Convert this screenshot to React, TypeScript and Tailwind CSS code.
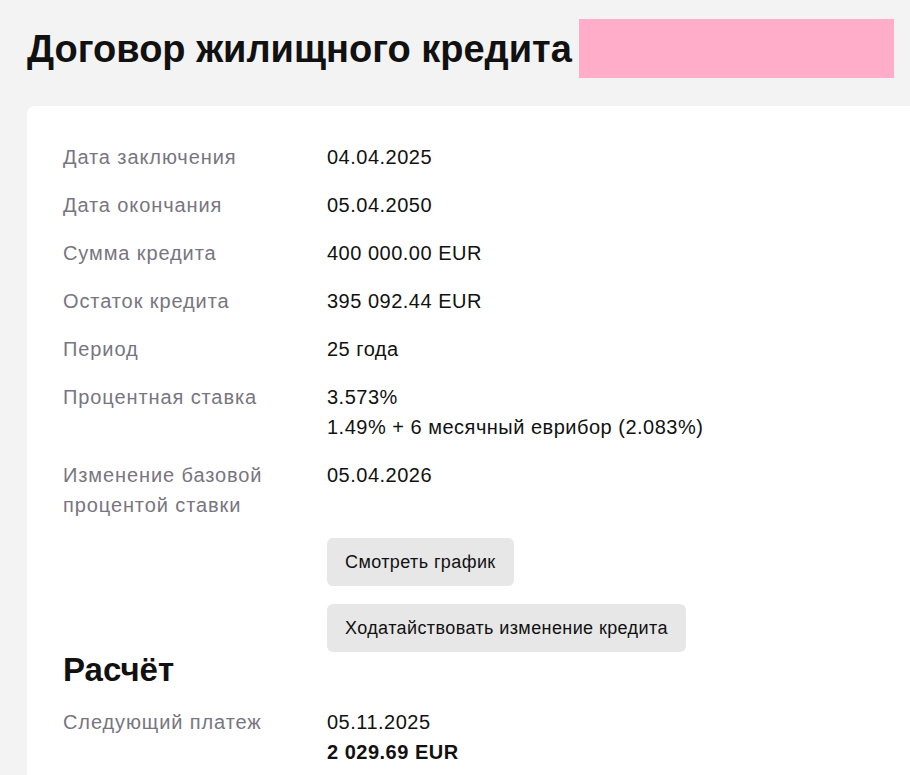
const rows: { label: string; value: string[] }[] = [
  { label: "Дата заключения", value: ["04.04.2025"] },
  { label: "Дата окончания", value: ["05.04.2050"] },
  { label: "Сумма кредита", value: ["400 000.00 EUR"] },
  { label: "Остаток кредита", value: ["395 092.44 EUR"] },
  { label: "Период", value: ["25 года"] },
  { label: "Процентная ставка", value: ["3.573%", "1.49% + 6 месячный еврибор (2.083%)"] },
  { label: "Изменение базовой процентой ставки", value: ["05.04.2026"] },
];

const Row = ({ label, value }: { label: string; value: React.ReactNode }) => (
  <div className="flex">
    <div className="w-[264px] shrink-0 pr-6 text-[#787580] tracking-[0.9px]">{label}</div>
    <div className="text-[#111] tracking-[0.5px]">{value}</div>
  </div>
);

export default function App() {
  return (
    <div
      className="min-h-screen bg-[#f3f3f3] pl-[27px] pt-[19px] overflow-hidden"
      style={{ fontFamily: "'Liberation Sans', Arial, sans-serif" }}
    >
      <div className="flex items-center gap-[7px] h-[59px]">
        <h1 className="text-[38px] font-bold text-[#111] leading-none">
          Договор жилищного кредита
        </h1>
        <div className="w-[315px] h-[59px] bg-[#ffadc9]" />
      </div>

      <div className="mt-[28px] bg-white rounded-l-lg pl-9 pt-9 pb-10 text-[20px] leading-[30px]">
        <div className="flex flex-col gap-[18px]">
          {rows.map((r) => (
            <Row
              key={r.label}
              label={r.label}
              value={r.value.map((v) => (
                <div key={v}>{v}</div>
              ))}
            />
          ))}
        </div>

        <div className="ml-[264px] mt-[18px] flex flex-col items-start gap-[18px]">
          <button className="h-12 px-[18px] rounded-md bg-[#e7e7e7] text-[18px] tracking-[0.4px] text-[#111]">
            Смотреть график
          </button>
          <button className="h-12 px-[18px] rounded-md bg-[#e7e7e7] text-[18px] tracking-[0.4px] text-[#111]">
            Ходатайствовать изменение кредита
          </button>
        </div>

        <h2 className="mt-0 text-[33px] leading-[36px] font-bold text-[#111]">Расчёт</h2>

        <div className="mt-[19px]">
          <Row
            label="Следующий платеж"
            value={
              <>
                <div>05.11.2025</div>
                <div className="font-bold">2 029.69 EUR</div>
              </>
            }
          />
        </div>
      </div>
    </div>
  );
}
